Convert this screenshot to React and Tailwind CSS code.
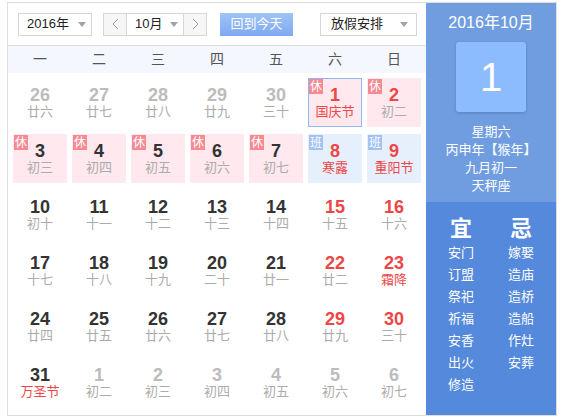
import React from "react";

// flags: o = other month, w = weekend (red number), f = festival (red lunar),
// r = rest badge, b = work badge, s = selected
const rows = [
  [[26, "廿六", "o"], [27, "廿七", "o"], [28, "廿八", "o"], [29, "廿九", "o"], [30, "三十", "o"], [1, "国庆节", "wfrs"], [2, "初二", "wr"]],
  [[3, "初三", "r"], [4, "初四", "r"], [5, "初五", "r"], [6, "初六", "r"], [7, "初七", "r"], [8, "寒露", "wfb"], [9, "重阳节", "wfb"]],
  [[10, "初十", ""], [11, "十一", ""], [12, "十二", ""], [13, "十三", ""], [14, "十四", ""], [15, "十五", "w"], [16, "十六", "w"]],
  [[17, "十七", ""], [18, "十八", ""], [19, "十九", ""], [20, "二十", ""], [21, "廿一", ""], [22, "廿二", "w"], [23, "霜降", "wf"]],
  [[24, "廿四", ""], [25, "廿五", ""], [26, "廿六", ""], [27, "廿七", ""], [28, "廿八", ""], [29, "廿九", "w"], [30, "三十", "w"]],
  [[31, "万圣节", "f"], [1, "初二", "o"], [2, "初三", "o"], [3, "初四", "o"], [4, "初五", "o"], [5, "初六", "o"], [6, "初七", "o"]],
];

const weekdays = ["一", "二", "三", "四", "五", "六", "日"];
const good = ["安门", "订盟", "祭祀", "祈福", "安香", "出火", "修造"];
const bad = ["嫁娶", "造庙", "造桥", "造船", "作灶", "安葬"];

function Caret() {
  return (
    <svg width="8" height="5" viewBox="0 0 8 5">
      <path d="M0 0 L8 0 L4 5 Z" fill="#a3a3a3" />
    </svg>
  );
}

function Chevron({ dir }) {
  return (
    <svg width="7" height="12" viewBox="0 0 7 12">
      <path
        d={dir === "left" ? "M6 1 L1 6 L6 11" : "M1 1 L6 6 L1 11"}
        fill="none"
        stroke="#9a9a9a"
        strokeWidth="1"
      />
    </svg>
  );
}

function DayCell({ cell }) {
  const [d, lunar, flags] = cell;
  const out = flags.includes("o");
  const weekend = flags.includes("w");
  const festival = flags.includes("f");
  const rest = flags.includes("r");
  const work = flags.includes("b");
  const selected = flags.includes("s");

  let bg = "";
  if (rest) bg = "bg-[#ffe8ee]";
  if (work) bg = "bg-[#e6f0fd]";

  let numColor = "text-[#333333]";
  if (weekend) numColor = "text-[#ee4646]";
  if (out) numColor = "text-[#bcbcbc]";

  return (
    <div
      className={`relative h-[49px] border pt-[7px] text-center ${
        selected ? "border-[#8db8f2]" : "border-transparent"
      } ${bg}`}
    >
      {rest && (
        <span className="absolute left-0 top-0 flex h-[15px] w-[14px] items-center justify-center bg-[#f58a93] text-[12px] leading-none text-white">
          休
        </span>
      )}
      {work && (
        <span className="absolute left-0 top-0 flex h-[15px] w-[14px] items-center justify-center bg-[#a2c1f5] text-[12px] leading-none text-white">
          班
        </span>
      )}
      <div className={`text-[18px] font-bold leading-[18px] ${numColor}`}>{d}</div>
      <div
        className={`text-[13px] leading-[16px] ${
          festival ? "text-[#ee4646]" : "text-[#ababab]"
        }`}
      >
        {lunar}
      </div>
    </div>
  );
}

export default function App() {
  return (
    <div className="bg-white pl-[7px] pt-[2px] font-['Liberation_Sans','Noto_Sans_CJK_SC',sans-serif]">
      <div className="flex h-[414px] w-[550px] border border-[#dddddd]">
        {/* calendar */}
        <div className="w-[418px]">
          <div className="flex h-[43px] items-center border-b border-[#dddddd] pl-[10px] text-[13px] text-[#222222]">
            <div className="flex h-[23px] w-[74px] items-center justify-between border border-[#d6d6d6] pl-[8px] pr-[5px]">
              <span>2016年</span>
              <Caret />
            </div>

            <div className="ml-[11px] flex h-[23px] border border-[#d6d6d6]">
              <button className="flex w-[22px] items-center justify-center bg-[#f6f6f6]">
                <Chevron dir="left" />
              </button>
              <div className="flex w-[58px] items-center justify-between border-x border-[#d6d6d6] bg-white pl-[8px] pr-[5px]">
                <span>10月</span>
                <Caret />
              </div>
              <button className="flex w-[22px] items-center justify-center bg-[#f6f6f6]">
                <Chevron dir="right" />
              </button>
            </div>

            <button className="ml-[13px] h-[23px] w-[73px] bg-gradient-to-b from-[#9ec3f7] to-[#7faaf0] text-[13px] text-white">
              回到今天
            </button>

            <div className="ml-[27px] flex h-[23px] w-[97px] items-center justify-between border border-[#d6d6d6] pl-[10px] pr-[8px]">
              <span>放假安排</span>
              <Caret />
            </div>
          </div>

          <div className="grid h-[27px] grid-cols-7 gap-x-[5px] bg-[#f4f7fe] px-[5px] text-[14px] text-[#555555]">
            {weekdays.map((w) => (
              <div key={w} className="flex items-center justify-center">
                {w}
              </div>
            ))}
          </div>

          <div className="grid grid-cols-7 gap-x-[5px] gap-y-[7px] px-[5px] pt-[5px]">
            {rows.flat().map((cell, i) => (
              <DayCell key={i} cell={cell} />
            ))}
          </div>
        </div>

        {/* side panel */}
        <div className="flex w-[130px] flex-col text-white">
          <div className="flex h-[199px] flex-col items-center bg-[#6f9de0] pt-[10px]">
            <div className="text-[16px] leading-[20px]">2016年10月</div>
            <div className="mt-[9px] flex h-[70px] w-[70px] items-center justify-center rounded-[3px] bg-[#8cbcfe] text-[40px] shadow-[0_1px_3px_rgba(40,80,150,0.35)]">
              1
            </div>
            <div className="mt-[11px] text-center text-[13px] leading-[18px]">
              <div>星期六</div>
              <div>丙申年【猴年】</div>
              <div>九月初一</div>
              <div>天秤座</div>
            </div>
          </div>

          <div className="flex flex-1 bg-[#5589db] px-[5px] pt-[14px]">
            <div className="flex w-[60px] flex-col items-center">
              <div className="text-[22px] font-bold leading-[26px]">宜</div>
              {good.map((t) => (
                <div key={t} className="text-[13px] leading-[22px]">
                  {t}
                </div>
              ))}
            </div>
            <div className="flex w-[60px] flex-col items-center">
              <div className="text-[22px] font-bold leading-[26px]">忌</div>
              {bad.map((t) => (
                <div key={t} className="text-[13px] leading-[22px]">
                  {t}
                </div>
              ))}
            </div>
          </div>
        </div>
      </div>
    </div>
  );
}
